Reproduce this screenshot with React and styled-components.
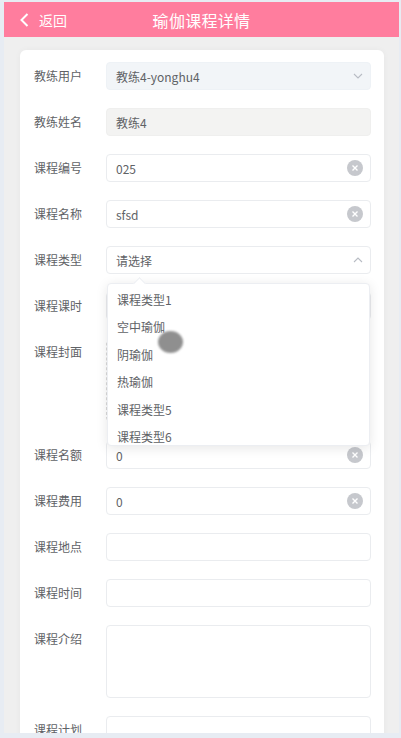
import styled, { createGlobalStyle } from "styled-components";

const FIELDS = [
  { id: "coach", label: "教练用户", kind: "select", value: "教练4-yonghu4", tone: "select" },
  { id: "name", label: "教练姓名", kind: "text", value: "教练4", tone: "disabled" },
  { id: "code", label: "课程编号", kind: "text", value: "025", clearable: true },
  { id: "title", label: "课程名称", kind: "text", value: "sfsd", clearable: true },
  { id: "type", label: "课程类型", kind: "select", value: "请选择", open: true },
  { id: "hours", label: "课程课时", kind: "text", value: "" },
  { id: "cover", label: "课程封面", kind: "upload" },
  { id: "seats", label: "课程名额", kind: "text", value: "0", clearable: true },
  { id: "fee", label: "课程费用", kind: "text", value: "0", clearable: true },
  { id: "place", label: "课程地点", kind: "text", value: "" },
  { id: "time", label: "课程时间", kind: "text", value: "" },
  { id: "intro", label: "课程介绍", kind: "textarea" },
  { id: "plan", label: "课程计划", kind: "textarea" },
];

const TYPE_OPTIONS = ["课程类型1", "空中瑜伽", "阴瑜伽", "热瑜伽", "课程类型5", "课程类型6"];

const GlobalStyle = createGlobalStyle`
  html, body {
    margin: 0;
    padding: 0;
    background: #e7ecf3;
    font-family: "Noto Sans CJK SC", "Noto Sans", sans-serif;
  }
`;

const Frame = styled.div`
  height: 738px;
  box-sizing: border-box;
  padding: 2px 2px 5px 4px;
  background: #e7ecf3;
`;

const Screen = styled.div`
  position: relative;
  height: 100%;
  display: flex;
  flex-direction: column;
  background: #efefef;
  overflow: hidden;
`;

const Header = styled.header`
  height: 35px;
  flex-shrink: 0;
  display: grid;
  grid-template-columns: 1fr auto 1fr;
  align-items: center;
  background: #ff7d9e;
  color: #fff;
`;

const Back = styled.div`
  display: flex;
  align-items: center;
  gap: 10px;
  padding-left: 16px;
  font-size: 14px;
`;

const Title = styled.h1`
  margin: 0;
  font-size: 16px;
  font-weight: 400;
  letter-spacing: 0.3px;
`;

const Content = styled.main`
  padding: 13px 15px 0 16px;
`;

const Card = styled.section`
  background: #fff;
  border-radius: 6px;
  padding: 12px 13px 0 14px;
  box-shadow: 0 0 6px rgba(0, 0, 0, 0.04);
`;

const Row = styled.div`
  display: flex;
  margin-bottom: 18px;
`;

const Label = styled.label`
  width: 72px;
  flex-shrink: 0;
  font-size: 12px;
  line-height: 27px;
  color: #606266;
`;

const Field = styled.div`
  position: relative;
  flex: 1;
`;

const Box = styled.div`
  height: ${(p) => (p.$tall ? "73px" : "28px")};
  box-sizing: border-box;
  display: flex;
  align-items: center;
  justify-content: space-between;
  padding: 0 7px 0 9px;
  border: 1px solid
    ${(p) => (p.$tone === "select" ? "#eef2f6" : p.$tone === "disabled" ? "#efefee" : "#eaecef")};
  border-radius: 4px;
  background: ${(p) =>
    p.$tone === "select" ? "#f2f5f8" : p.$tone === "disabled" ? "#f3f3f2" : "#fff"};
  font-size: 12px;
  color: #606266;
`;

const Upload = styled.div`
  width: 85px;
  height: 85px;
  box-sizing: border-box;
  border: 1px dashed #d9d9d9;
  border-radius: 6px;
`;

const ClearIcon = styled.span`
  width: 16px;
  height: 16px;
  border-radius: 50%;
  background: #c6c8cd;
  display: flex;
  align-items: center;
  justify-content: center;
`;

const Dropdown = styled.div`
  position: absolute;
  top: calc(100% + 9px);
  left: 1px;
  right: 1px;
  height: 161px;
  z-index: 5;
  background: #fff;
  border: 1px solid #eceef2;
  border-radius: 4px;
  box-shadow: 0 2px 12px rgba(0, 0, 0, 0.1);

  &::before {
    content: "";
    position: absolute;
    top: -5px;
    left: 27px;
    width: 8px;
    height: 8px;
    background: #fff;
    border-left: 1px solid #eceef2;
    border-top: 1px solid #eceef2;
    transform: rotate(45deg);
  }
`;

const OptionList = styled.ul`
  list-style: none;
  margin: 0;
  padding: 2px 0 0;
  height: 100%;
  overflow: hidden;
`;

const Option = styled.li`
  height: 27.4px;
  line-height: 27.4px;
  padding-left: 9px;
  font-size: 12px;
  color: #606266;
`;

const TouchDot = styled.div`
  position: absolute;
  left: 154px;
  top: 329px;
  width: 25px;
  height: 22px;
  border-radius: 50%;
  background: #8a8a8a;
  filter: blur(0.8px);
  opacity: 0.95;
  z-index: 9;
`;

function Chevron({ up }) {
  return (
    <svg width="10" height="6" viewBox="0 0 10 6">
      <path
        d={up ? "M1 5 L5 1 L9 5" : "M1 1 L5 5 L9 1"}
        fill="none"
        stroke="#b8bcc4"
        strokeWidth="1.1"
      />
    </svg>
  );
}

function Clear() {
  return (
    <ClearIcon>
      <svg width="8" height="8" viewBox="0 0 8 8">
        <path d="M1.5 1.5 L6.5 6.5 M6.5 1.5 L1.5 6.5" stroke="#fff" strokeWidth="1.4" />
      </svg>
    </ClearIcon>
  );
}

function FormField({ field }) {
  if (field.kind === "upload") return <Upload />;
  if (field.kind === "textarea") return <Box $tall />;
  return (
    <>
      <Box $tone={field.tone}>
        <span>{field.value}</span>
        {field.kind === "select" && <Chevron up={field.open} />}
        {field.clearable && <Clear />}
      </Box>
      {field.open && (
        <Dropdown>
          <OptionList>
            {TYPE_OPTIONS.map((o) => (
              <Option key={o}>{o}</Option>
            ))}
          </OptionList>
        </Dropdown>
      )}
    </>
  );
}

export default function App() {
  return (
    <Frame>
      <GlobalStyle />
      <Screen>
        <Header>
          <Back>
            <svg width="9" height="14" viewBox="0 0 9 14">
              <path d="M7.5 1 L1.5 7 L7.5 13" fill="none" stroke="#fff" strokeWidth="2" />
            </svg>
            <span>返回</span>
          </Back>
          <Title>瑜伽课程详情</Title>
          <div />
        </Header>
        <Content>
          <Card>
            {FIELDS.map((f) => (
              <Row key={f.id}>
                <Label>{f.label}</Label>
                <Field>
                  <FormField field={f} />
                </Field>
              </Row>
            ))}
          </Card>
        </Content>
        <TouchDot />
      </Screen>
    </Frame>
  );
}
